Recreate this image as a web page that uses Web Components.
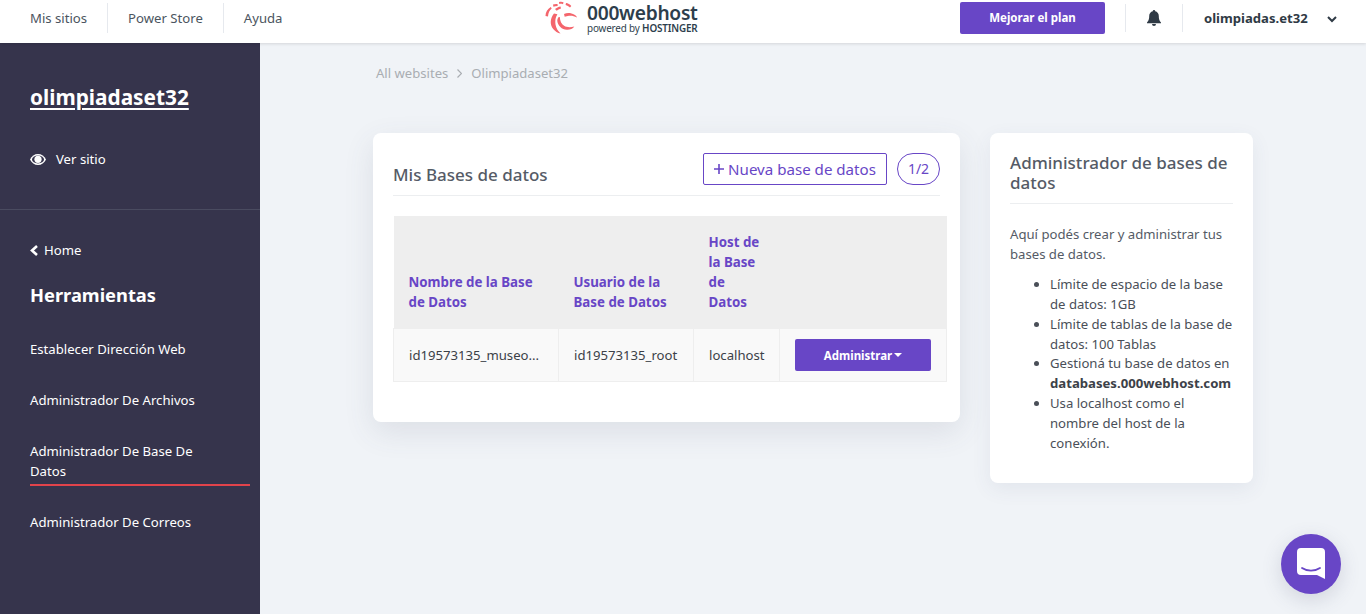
<!DOCTYPE html>
<html lang="es">
<head>
<meta charset="utf-8">
<title>Mis Bases de datos</title>
<style>
  html, body { margin: 0; height: 100%; }
  body { background: #f0f3f7; font-family: "Noto Sans", sans-serif; overflow: hidden; }
  .shell { display: flex; height: 571px; }
  .main { flex: 1; min-width: 0; }
</style>
</head>
<body>
<top-bar></top-bar>
<div class="shell">
  <side-bar></side-bar>
  <div class="main">
    <bread-crumbs></bread-crumbs>
    <db-layout>
      <db-card></db-card>
      <info-card slot="aside"></info-card>
    </db-layout>
  </div>
</div>
<chat-bubble></chat-bubble>

<script>
// top navigation
class TopBar extends HTMLElement {
  constructor() {
    super();
    this.attachShadow({ mode: "open" }).innerHTML = `
      <style>
        :host { display: flex; align-items: center; height: 43px; background: #fff; position: relative; z-index: 2; box-shadow: 0 1px 3px rgba(0,0,0,.12); color: #2f3a45; }
        nav { display: flex; align-items: center; padding-left: 10px; flex: 1; }
        nav a { font-size: 13.15px; color: #4b5560; padding: 0 20px; height: 30px; line-height: 30px; border-right: 1px solid #e6e9ee; margin-top: -7px; }
        nav a:last-child { border: 0; }
        .logo { position: absolute; left: 544px; top: 1px; display: flex; gap: 7px; }
        .logo svg { width: 36px; height: 34px; }
        .brand { display: flex; flex-direction: column; color: #2d3e4c; }
        .brand b { font-size: 19.2px; line-height: 20px; font-weight: 600; letter-spacing: -.28px; margin-top: 2px; }
        .brand span { font-size: 9.9px; line-height: 10px; letter-spacing: -.15px; }
        .brand span strong { font-weight: 600; }
        .right { display: flex; align-items: center; height: 43px; margin-top: -7px; }
        .up { width: 145px; height: 32px; background: #6846c6; border-radius: 2px; color: #fff; font-size: 11.5px; font-weight: 700; text-align: center; line-height: 32px; }
        .bell { width: 58px; height: 28px; margin-left: 20px; border: solid #e6e9ee; border-width: 0 1px; display: flex; align-items: center; justify-content: center; box-sizing: border-box; }
        .user { font-size: 13.1px; font-weight: 700; width: 183px; padding-left: 21px; box-sizing: border-box; display: flex; align-items: center; }
        .user svg { margin-left: 19px; margin-top: 2px; }
      </style>
      <nav><a>Mis sitios</a><a>Power Store</a><a>Ayuda</a></nav>
      <div class="logo">
        <svg viewBox="0 0 36 34" fill="#f4656c">
          <path d="M15 1c1.500-.500 3-.500 4.500.200l-.500 2c-1.300-.400-2.600-.400-3.800-.200z"/>
          <path d="M22 2c2 .300 3.800 1.300 5.300 3l-1.300 1.400c-1.300-1.100-2.800-2-4.400-2.500z"/>
          <path d="M9 3.500c1.200-.500 3-.700 4.500-.500l.200 2c-1.600.100-3 .300-4.300.700z"/>
          <path d="M11 8c1.500-1.300 3.500-2.300 5.500-2.600l.500 2c-1.800.500-3.200 1.300-4.300 2.300z"/>
          <path d="M1.500 15C1.500 11 3.500 8 6.800 6l.900 1.600C5.500 9.500 4.200 12 4 15.500z"/>
          <path d="M20 13c3-1.500 7-1.400 10.500.800 1 .600 2 1.400 2.500 2.700-3-1.800-6-2-8-1.700-1.700.200-3 .500-4.300 1z"/>
          <path d="M10 12.500c-3.800 4.500-4.500 11-.800 15.500 1.800 2.300 4.500 4 7.300 4.500-2.500-2.500-4.500-5.500-5-9-.500-3.500-.200-7 1.900-10.300z"/>
          <path d="M15.800 16c.200 3.800 1.500 7 4.300 8.800 2.800 1.800 6.500 1.800 10.200.700-1.500 2.300-4.500 3.500-7.500 3.300-4.900-.300-9-4-9.500-8.800-.100-1.500.500-3 1.500-4z"/>
        </svg>
        <div class="brand"><b>000webhost</b><span>powered by <strong>HOSTINGER</strong></span></div>
      </div>
      <div class="right">
        <div class="up">Mejorar el plan</div>
        <div class="bell">
          <svg width="16" height="16" viewBox="0 0 16 16" fill="#2f3a45"><path d="M8 0a1.200 1.200 0 0 0-1.200 1.300C4.600 1.800 3.200 3.600 3.200 6c0 4-1.200 5.300-2.200 6.400v.8h14v-.8C14 11.300 12.800 10 12.800 6c0-2.400-1.400-4.200-3.600-4.700A1.200 1.200 0 0 0 8 0zM6 14a2 2 0 0 0 4 0z"/></svg>
        </div>
        <div class="user">olimpiadas.et32
          <svg width="10" height="7" viewBox="0 0 10 7" fill="none" stroke="#2f3a45" stroke-width="2"><path d="M1 1l4 4 4-4"/></svg>
        </div>
      </div>`;
  }
}

class SideBar extends HTMLElement {
  constructor() {
    super();
    this.attachShadow({ mode: "open" }).innerHTML = `
      <style>
        :host { display: block; width: 260px; flex: none; background: #36344c; color: #fff; font-size: 13.15px; }
        .site { padding: 38px 30px 0; height: 128px; border-bottom: 1px solid #4a4b60; }
        h2 { margin: 0; font-size: 20.8px; line-height: 32px; font-weight: 700; text-decoration: underline; text-decoration-thickness: 2px; text-underline-offset: 3px; }
        .see { display: flex; align-items: center; gap: 10px; margin-top: 36px; line-height: 20px; }
        .tools { padding: 30px 10px 0 30px; }
        .home { display: flex; align-items: center; gap: 5px; line-height: 20px; }
        h3 { margin: 20px 0 29px; font-size: 18.3px; line-height: 30px; font-weight: 700; }
        .item { line-height: 20px; margin-bottom: 31px; }
        .item.on { border-bottom: 2px solid #e2434b; padding-bottom: 3px; margin-bottom: 26px; }
        .item.on span { display: block; max-width: 190px; }
      </style>
      <div class="site">
        <h2>olimpiadaset32</h2>
        <div class="see">
          <svg width="16" height="11" viewBox="0 0 16 11">
            <path fill="#fff" d="M8 0C4.500 0 1.600 2 0 5.500 1.600 9 4.500 11 8 11s6.400-2 8-5.500C14.400 2 11.500 0 8 0z"/>
            <ellipse cx="8" cy="5.500" rx="6" ry="3.900" fill="#36344c"/>
            <circle cx="8" cy="5.300" r="3.600" fill="#fff"/>
          </svg>
          <span>Ver sitio</span>
        </div>
      </div>
      <div class="tools">
        <div class="home">
          <svg width="9" height="11" viewBox="0 0 9 11" fill="none" stroke="#fff" stroke-width="2.600"><path d="M7 1L2 5.500 7 10"/></svg>
          <span>Home</span>
        </div>
        <h3>Herramientas</h3>
        <div class="item">Establecer Dirección Web</div>
        <div class="item">Administrador De Archivos</div>
        <div class="item on"><span>Administrador De Base De Datos</span></div>
        <div class="item">Administrador De Correos</div>
      </div>`;
  }
}

class BreadCrumbs extends HTMLElement {
  constructor() {
    super();
    this.attachShadow({ mode: "open" }).innerHTML = `
      <style>
        :host { display: flex; align-items: center; gap: 9px; padding: 20px 0 0 116px; height: 20px; font-size: 13.1px; line-height: 20px; color: #a9adb2; }
      </style>
      <span>All websites</span>
      <svg width="5" height="9" viewBox="0 0 5 9" fill="none" stroke="#a9adb2" stroke-width="1.200"><path d="M.5.500l4 4-4 4"/></svg>
      <span>Olimpiadaset32</span>`;
  }
}

class DbLayout extends HTMLElement {
  constructor() {
    super();
    this.attachShadow({ mode: "open" }).innerHTML = `
      <style>
        :host { display: flex; align-items: flex-start; gap: 30px; padding: 50px 0 0 113px; }
      </style>
      <slot></slot><slot name="aside"></slot>`;
  }
}

class DbCard extends HTMLElement {
  constructor() {
    super();
    this.attachShadow({ mode: "open" }).innerHTML = `
      <style>
        :host { display: block; width: 587px; height: 289px; box-sizing: border-box; padding: 20px 20px 0; background: #fff; border-radius: 8px; box-shadow: 0 10px 30px rgba(70,80,110,.12); }
        .head { display: flex; align-items: flex-end; height: 42px; border-bottom: 1px solid #eceef0; }
        h4 { margin: 0 auto 0 0; font-size: 17px; font-weight: 500; color: #555b66; line-height: 24px; padding-bottom: 8px; }
        .add { box-sizing: border-box; height: 32px; width: 184px; margin-bottom: 10px; border: 1px solid #6846c6; border-radius: 2px; color: #6846c6; font-size: 15.1px; line-height: 30px; display: flex; align-items: center; justify-content: center; gap: 4px; white-space: nowrap; }
        .count { box-sizing: border-box; width: 43px; height: 32px; margin: 0 0 10px 10px; border: 1px solid #6846c6; border-radius: 16px; color: #6846c6; font-size: 14px; line-height: 30px; text-align: center; }
        table { margin-top: 20px; width: 553px; border-collapse: collapse; table-layout: fixed; font-size: 13.15px; color: #3c4148; }
        th { background: #eeeeee; color: #6846c6; text-align: left; vertical-align: bottom; font-size: 13.3px; font-weight: 700; line-height: 20px; padding: 16px 15px; height: 112px; box-sizing: border-box; }
        td { background: #f9f9f9; height: 53px; box-sizing: border-box; padding: 0 15px; border: 1px solid #eeeeee; white-space: nowrap; }
        td.host { padding-right: 5px; }
        .manage { display: flex; align-items: center; justify-content: center; gap: 2px; height: 32px; background: #6846c6; border-radius: 2px; color: #fff; font-size: 11.5px; font-weight: 700; }
        .manage i { border: 4px solid transparent; border-top-color: #fff; border-bottom: 0; }
      </style>
      <div class="head">
        <h4>Mis Bases de datos</h4>
        <div class="add">
          <svg width="10" height="10" viewBox="0 0 10 10" fill="none" stroke="#6846c6" stroke-width="1.600"><path d="M5 0v10M0 5h10"/></svg>
          <span>Nueva base de datos</span>
        </div>
        <div class="count">1/2</div>
      </div>
      <table>
        <colgroup><col style="width:165px"><col style="width:135px"><col style="width:86px"><col style="width:167px"></colgroup>
        <tr>
          <th>Nombre de la Base de Datos</th>
          <th>Usuario de la Base de Datos</th>
          <th>Host de la Base de Datos</th>
          <th></th>
        </tr>
        <tr>
          <td>id19573135_museo...</td>
          <td>id19573135_root</td>
          <td class="host">localhost</td>
          <td><div class="manage">Administrar<i></i></div></td>
        </tr>
      </table>`;
  }
}

class InfoCard extends HTMLElement {
  constructor() {
    super();
    this.attachShadow({ mode: "open" }).innerHTML = `
      <style>
        :host { display: block; width: 263px; height: 350px; box-sizing: border-box; padding: 20px; background: #fff; border-radius: 8px; box-shadow: 0 6px 20px rgba(70,80,110,.08); color: #555b66; font-size: 13.15px; line-height: 20px; }
        h4 { margin: 0 0 20px; padding-bottom: 10px; border-bottom: 1px solid #eceef0; font-size: 17px; line-height: 20px; font-weight: 500; }
        p { margin: 0 0 11px; }
        ul { margin: 0; padding-left: 40px; color: #4a4f58; line-height: 19.85px; }
        b { color: #3c4148; }
      </style>
      <h4>Administrador de bases de datos</h4>
      <p>Aquí podés crear y administrar tus bases de datos.</p>
      <ul>
        <li>Límite de espacio de la base de datos: 1GB</li>
        <li>Límite de tablas de la base de datos: 100 Tablas</li>
        <li>Gestioná tu base de datos en <b>databases.000webhost.com</b></li>
        <li>Usa localhost como el nombre del host de la conexión.</li>
      </ul>`;
  }
}

class ChatBubble extends HTMLElement {
  constructor() {
    super();
    this.attachShadow({ mode: "open" }).innerHTML = `
      <style>
        :host { position: fixed; left: 1281px; top: 534px; width: 60px; height: 60px; border-radius: 50%; background: #6846c6; display: flex; align-items: center; justify-content: center; box-shadow: 0 6px 20px rgba(70,80,110,.18); }
      </style>
      <svg width="28" height="32" viewBox="0 0 28 32">
        <path fill="#fff" d="M4 0h20a4 4 0 0 1 4 4v27l-8-4H4a4 4 0 0 1-4-4V4a4 4 0 0 1 4-4z"/>
        <path fill="none" stroke="#6846c6" stroke-width="1.800" stroke-linecap="round" d="M5 20c5 3.500 13 3.500 18 0"/>
      </svg>`;
  }
}

customElements.define("top-bar", TopBar);
customElements.define("side-bar", SideBar);
customElements.define("bread-crumbs", BreadCrumbs);
customElements.define("db-layout", DbLayout);
customElements.define("db-card", DbCard);
customElements.define("info-card", InfoCard);
customElements.define("chat-bubble", ChatBubble);
</script>
</body>
</html>
